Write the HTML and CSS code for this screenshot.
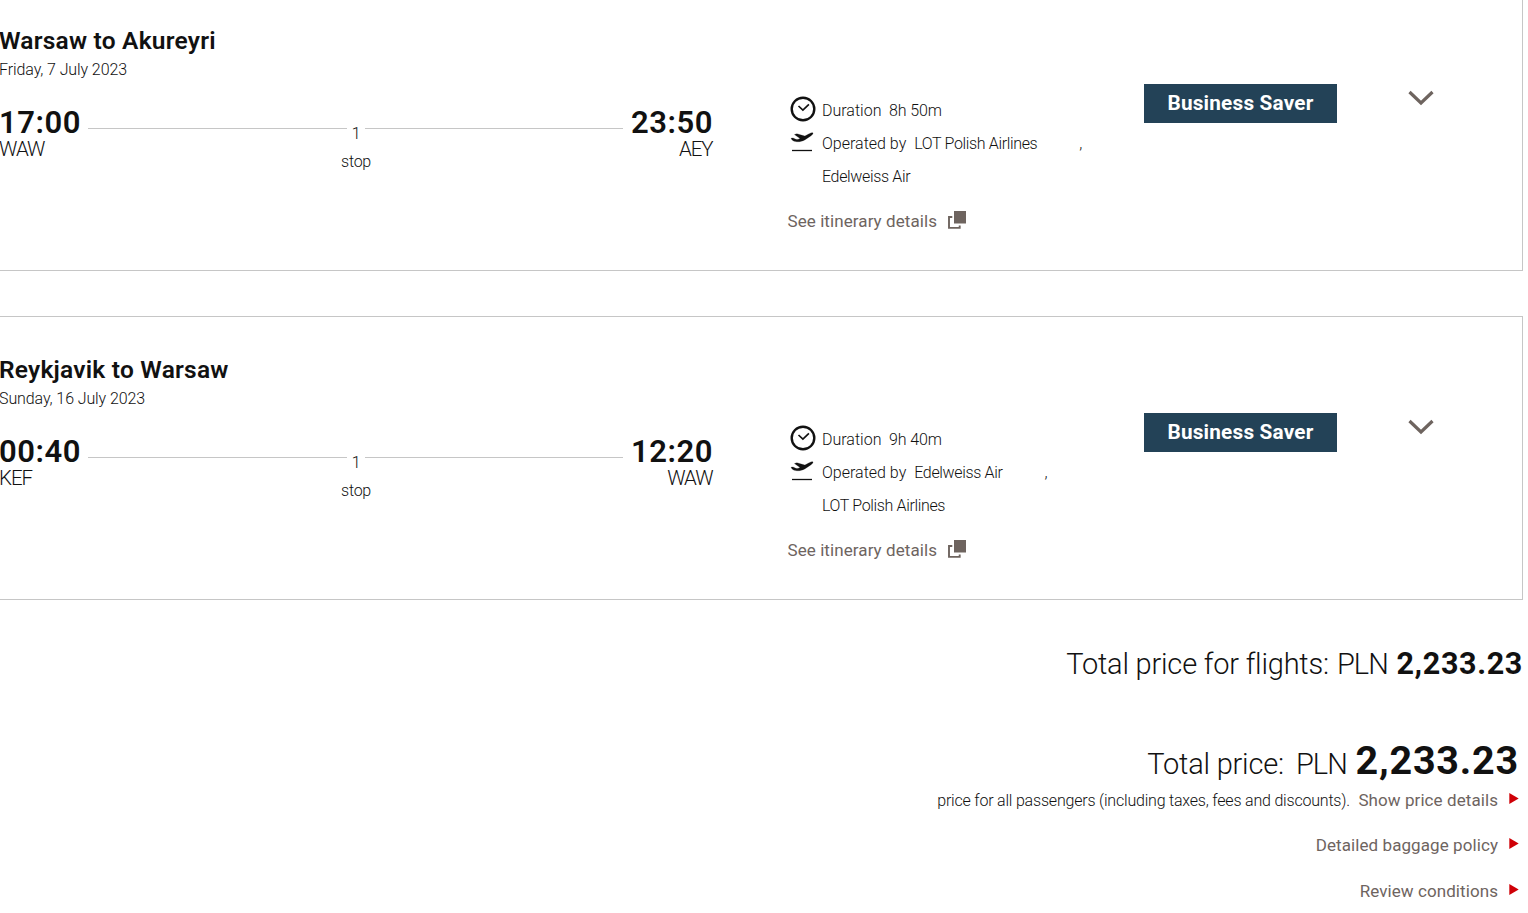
FILE: index.html
```
<!DOCTYPE html>
<html lang="en">
<head>
<meta charset="utf-8">
<title>Your flights</title>
<link rel="stylesheet" href="styles.css">
</head>
<body>
<svg class="defs" width="0" height="0" aria-hidden="true">
  <symbol id="clock" viewBox="0 0 26 26"><circle cx="13" cy="13" r="11.3" fill="none" stroke="currentColor" stroke-width="2.4"/><path d="M8.5 10l4.400 4.100 6-5.700" fill="none" stroke="currentColor" stroke-width="1.700"/></symbol>
  <symbol id="plane" viewBox="0 0 24 20"><path d="M1 6.400c1.300-1 2.800-.3 4.100.5 1.500.8 2.900.6 4.900-.4L4.400 2.600l2.500-.9 8 2.400 4.200-2.300C20.600.9 22.600.3 23 .9c.4.900-1.100 2.300-2.200 3L15.200 7.700c-3.400 2-6.700 2.400-9.500 1.900C3.400 9.200 1.700 8 1 6.400z" fill="currentColor" stroke="currentColor" stroke-width=".2"/><path d="M2 18.500h20" stroke="currentColor" stroke-width="1.300"/></symbol>
  <symbol id="window" viewBox="0 0 18 18"><path d="M6 0h12v12.500H6z" fill="currentColor"/><path d="M4.300 6H1v10.900h10.700v-2.500" fill="none" stroke="currentColor" stroke-width="1.900"/></symbol>
  <symbol id="chevron" viewBox="0 0 26 16"><path d="M1.500 2L13 13 24.500 2" fill="none" stroke="currentColor" stroke-width="3.200"/></symbol>
  <symbol id="arrow" viewBox="0 0 10 11"><path d="M.3 0L9.700 5.500.3 11z" fill="currentColor"/></symbol>
</svg>
<main class="page">
  <section class="card">
    <div class="route">
      <h2 class="title">Warsaw to Akureyri</h2>
      <p class="date">Friday, 7 July 2023</p>
      <div class="leg">
        <div class="end"><div class="time">17:00</div><div class="code">WAW</div></div>
        <div class="line"></div>
        <div class="stops"><span>1</span><span>stop</span></div>
        <div class="line"></div>
        <div class="end arrive"><div class="time">23:50</div><div class="code">AEY</div></div>
      </div>
    </div>
    <div class="details">
      <div class="info"><svg class="clock"><use href="#clock"/></svg><span>Duration</span><span class="duration">8h 50m</span></div>
      <div class="info"><svg class="plane"><use href="#plane"/></svg><span>Operated by</span><span class="carrier">LOT Polish Airlines</span><span class="comma">,</span></div>
      <div class="info second"><span class="carrier">Edelweiss Air</span></div>
      <a class="link itinerary">See itinerary details<svg class="window"><use href="#window"/></svg></a>
    </div>
    <div class="fare">Business Saver</div>
    <svg class="chevron"><use href="#chevron"/></svg>
  </section>
  <section class="card">
    <div class="route">
      <h2 class="title">Reykjavik to Warsaw</h2>
      <p class="date">Sunday, 16 July 2023</p>
      <div class="leg">
        <div class="end"><div class="time">00:40</div><div class="code">KEF</div></div>
        <div class="line"></div>
        <div class="stops"><span>1</span><span>stop</span></div>
        <div class="line"></div>
        <div class="end arrive"><div class="time">12:20</div><div class="code">WAW</div></div>
      </div>
    </div>
    <div class="details">
      <div class="info"><svg class="clock"><use href="#clock"/></svg><span>Duration</span><span class="duration">9h 40m</span></div>
      <div class="info"><svg class="plane"><use href="#plane"/></svg><span>Operated by</span><span class="carrier">Edelweiss Air</span><span class="comma">,</span></div>
      <div class="info second"><span class="carrier">LOT Polish Airlines</span></div>
      <a class="link itinerary">See itinerary details<svg class="window"><use href="#window"/></svg></a>
    </div>
    <div class="fare">Business Saver</div>
    <svg class="chevron"><use href="#chevron"/></svg>
  </section>
  <section class="totals">
    <div class="flights-total"><span class="label">Total price for flights:</span><span class="currency">PLN</span><strong class="amount">2,233.23</strong></div>
    <div class="grand-total"><span class="label">Total price:</span><span class="currency">PLN</span><strong class="amount big">2,233.23</strong></div>
    <div class="row"><span class="note">price for all passengers (including taxes, fees and discounts).</span><a class="link">Show price details</a><svg class="arrow"><use href="#arrow"/></svg></div>
    <div class="row"><a class="link">Detailed baggage policy</a><svg class="arrow"><use href="#arrow"/></svg></div>
    <div class="row"><a class="link">Review conditions</a><svg class="arrow"><use href="#arrow"/></svg></div>
  </section>
</main>
</body>
</html>
```
FILE: styles.css
```
* { box-sizing: border-box; }
html, body { height: 100%; overflow: hidden; }
body { margin: 0; background: #fff; color: #111; font: 300 16px/24px Roboto, sans-serif; white-space: nowrap; }
h2, p { margin: 0; }
svg { display: block; flex: none; }
.defs { position: absolute; }
.page { width: 1523px; margin-top: -13px; }

.card { display: grid; grid-template-columns: 713px 431px 193px auto; align-items: start; height: 284px; margin-bottom: 45px; border: 1px solid #c6c6c6; border-left: 0; }

.route { padding-top: 38px; }
.title { margin-left: -1px; font-size: 24.5px; line-height: 30px; font-weight: 600; letter-spacing: .22px; }
.date { margin: 2px 0 0 -1px; letter-spacing: -.1px; }
.leg { display: flex; margin-top: 25px; }
.end { width: 88px; margin-left: -1px; margin-right: 1px; }
.time { font-size: 31px; line-height: 32px; font-weight: 600; letter-spacing: .55px; }
.code { font-size: 20.5px; line-height: 20px; letter-spacing: -1.05px; }
.line { flex: 1; height: 1px; margin-top: 21px; background: #c6c6c6; }
.stops { display: flex; flex-direction: column; align-items: center; width: 18px; padding: 13px 0 0 1px; line-height: 28px; letter-spacing: -.25px; }
.end.arrive { width: 90px; margin: 0; text-align: right; }
.arrive .code { padding-right: .5px; }

.details { margin-left: 74px; padding-top: 106px; }
.info { display: flex; align-items: center; gap: 8px; height: 33px; }
.info.second { padding-left: 35px; }
.duration { margin-left: -.5px; letter-spacing: -.1px; }
.carrier { letter-spacing: -.35px; }
.comma { margin-left: 34px; }
.clock { width: 26px; height: 26px; margin: -4px -1.5px 0 2.5px; }
.plane { width: 24px; height: 20px; margin: -3px 0 0 3px; }
.link { margin-bottom: 2px; color: #6e645f; font-size: 17px; line-height: 22px; font-weight: 400; letter-spacing: .08px; }
.itinerary { display: flex; margin: 17px 0 0 .5px; }
.window { width: 18px; height: 18px; margin: 1px 0 0 10.6px; }

.fare { height: 39px; margin-top: 96px; background: #234257; color: #fff; font-size: 20.75px; line-height: 38px; font-weight: 700; letter-spacing: .2px; text-align: center; }
.chevron { width: 26px; height: 16px; margin: 102px 0 0 71px; color: #6e645f; }

.totals { display: flex; flex-direction: column; align-items: flex-end; margin-top: -1px; }
.flights-total, .grand-total { display: flex; align-items: baseline; font-size: 29px; line-height: 40px; }
.label { letter-spacing: -.2px; }
.currency { margin-left: 8px; letter-spacing: -.9px; }
.amount { margin-left: 8.5px; font-size: 30.5px; font-weight: 700; letter-spacing: .65px; }
.grand-total { height: 51px; margin: 54px 4px 0 0; line-height: 46px; }
.grand-total .currency { margin-left: 12px; }
.amount.big { font-size: 39.5px; letter-spacing: .8px; }
.row { display: flex; align-items: center; margin: 0 4px 21.4px 0; }
.note { margin-right: 8.5px; letter-spacing: -.2px; }
.arrow { width: 10px; height: 11px; margin: -5px 0 0 11px; color: #cf0007; }
```
